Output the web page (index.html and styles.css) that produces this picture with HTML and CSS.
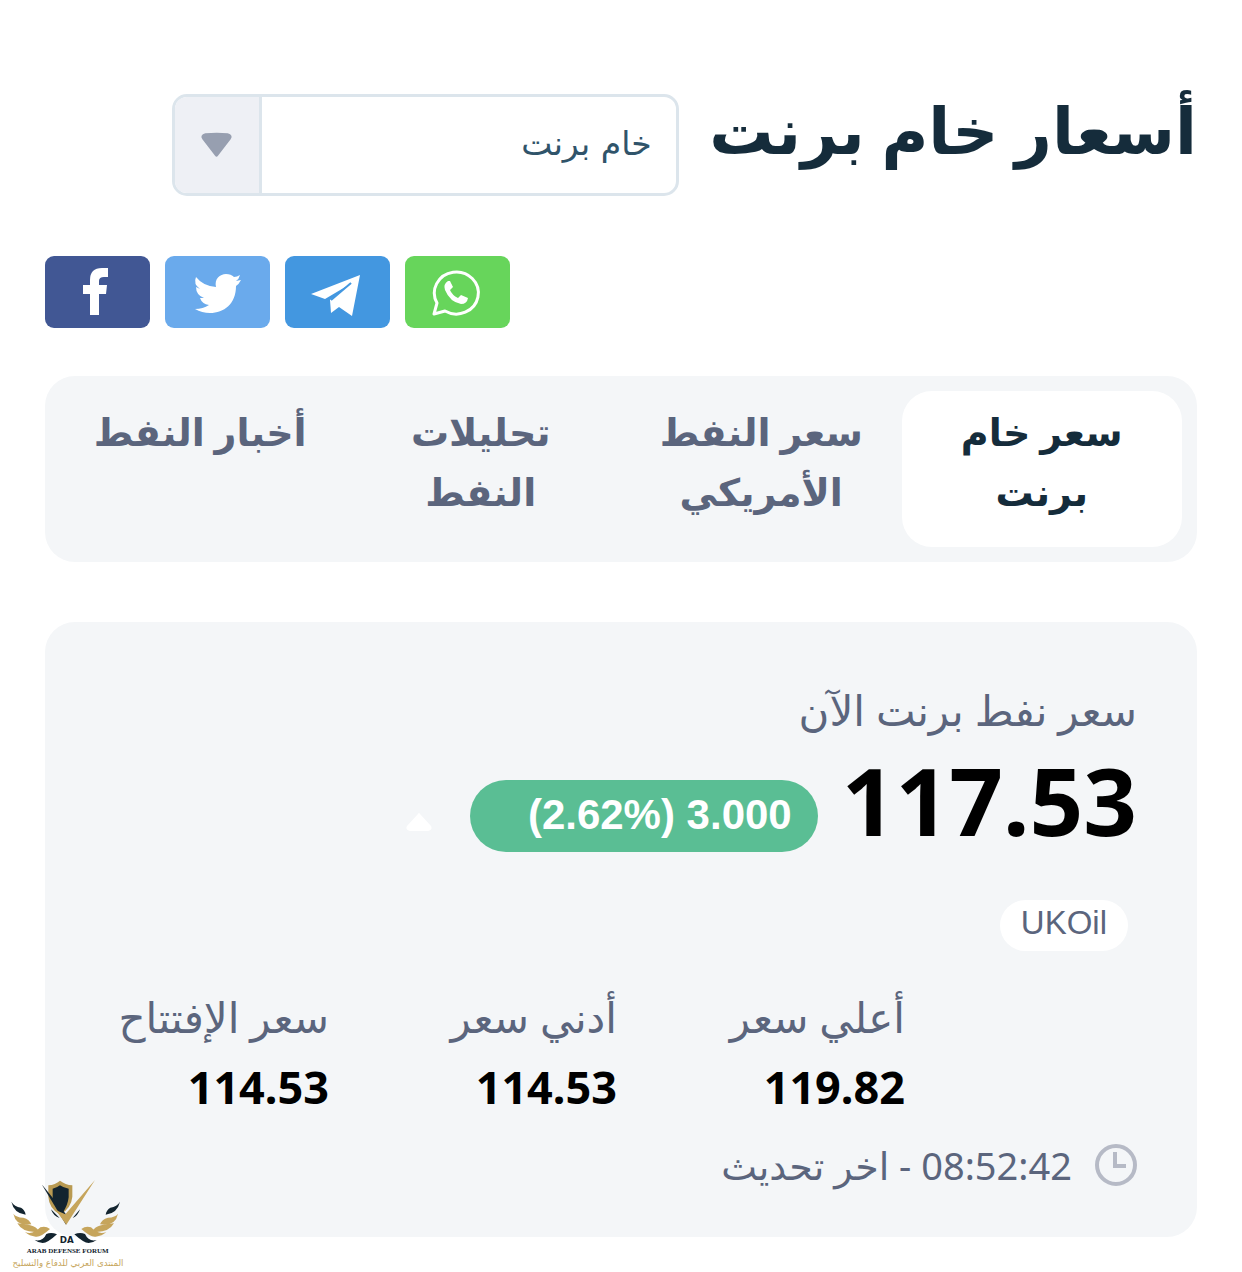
FILE: index.html
```
<!DOCTYPE html>
<html lang="ar" dir="rtl">
<head>
<meta charset="utf-8">
<meta name="viewport" content="width=device-width, initial-scale=1">
<title>أسعار خام برنت</title>
<link rel="stylesheet" href="styles.css">
</head>

<body>
<div class="page">
<div class="header">
	<h1 class="title">أسعار خام برنت</h1>
	<div class="selectbox">
		<select id="oil" aria-label="خام برنت">
			<option>خام برنت</option>
		</select>
		<svg class="arrow" width="86" height="96" viewBox="0 0 86 96"><path d="M31 36 Q43 35 54 36 Q60 38 57 42 L44 59 Q42.500 61 41 59 L28 42 Q25 38 31 36 Z" fill="#979fb0"/></svg>
	</div>
</div>

<div class="share">
	<a href="#" class="sharebutton whatsapp" aria-label="WhatsApp"><svg width="105" height="72" viewBox="0 0 105 72"><path d="M29 58 L32 47 A22 21 0 1 1 40 55 Z" fill="none" stroke="#fff" stroke-width="3" stroke-linejoin="round"/><path d="M43 25 Q38 28 40 34 Q45 46 56 48 Q62 48 63 42 L56 39 L53 42 Q47 39 45 34 L48 31 L45 25 Z" fill="#fff"/></svg></a>
	<a href="#" class="sharebutton telegram" aria-label="Telegram"><svg width="105" height="72" viewBox="0 0 105 72"><path d="M75 19 L67 60 L54 51 L46 57 L45 44 L67 27 L40 43 L26 38 Z" fill="#fff"/><path d="M46 44 L66 27" stroke="#4397e0" stroke-width="2"/></svg></a>
	<a href="#" class="sharebutton twitter" aria-label="Twitter"><svg width="105" height="72" viewBox="0 0 105 72"><path d="M31 21 Q38 30 51 31 C49 23 55 18 61 18 Q66 18 69 21 Q72 21 75 19 Q74 23 71 25 L76 24 Q74 28 71 30 C71 48 59 57 45 57 Q37 57 30 53 Q38 53 44 49 Q37 48 35 42 H39 Q31 39 31 31 L35 33 Q28 28 31 21 Z" fill="#fff"/></svg></a>
	<a href="#" class="sharebutton facebook" aria-label="Facebook"><svg width="105" height="72" viewBox="0 0 105 72"><path d="M45 59 V38 H38 V29 H45 V24 Q45 12 57 12 H63 V21 H59 Q54 21 54 25 V29 H62 L61 38 H54 V59 Z" fill="#fff"/></svg></a>
</div>

<div class="tabs">
	<a href="#" class="tab active">سعر خام<br>برنت</a>
	<a href="#" class="tab">سعر النفط<br>الأمريكي</a>
	<a href="#" class="tab">تحليلات<br>النفط</a>
	<a href="#" class="tab">أخبار النفط</a>
</div>

<div class="card">
	<div class="label">سعر نفط برنت الآن</div>
	<div class="pricerow">
		<span class="price">117.53</span>
		<span class="change" dir="ltr">(2.62%) 3.000</span>
		<svg class="up" width="26" height="20" viewBox="0 0 26 20"><path d="M12 2 Q13 0 14 2 L25 14 Q27 18 22 19 H4 Q-1 18 1 14 Z" fill="#fff"/></svg>
	</div>
	<span class="symbol">UKOil</span>
	<div class="stats">
		<div class="stat"><div class="label">أعلي سعر</div><div class="value">119.82</div></div>
		<div class="stat"><div class="label">أدني سعر</div><div class="value">114.53</div></div>
		<div class="stat"><div class="label">سعر الإفتتاح</div><div class="value">114.53</div></div>
	</div>
	<div class="updated">
		<svg width="42" height="42" viewBox="0 0 42 42" fill="none" stroke="#b6bac6"><circle cx="21" cy="21" r="19" stroke-width="4"/><path d="M20 8 V22 H31" stroke-width="4"/></svg>
		<span>08:52:42 - اخر تحديث</span>
	</div>
</div>

<svg class="forum" width="116" height="92" viewBox="30 57 348 276" direction="ltr">
	<path d="M145 76 Q166 74 180 62 Q196 74 217 76 V110 Q214 145 180 164 Q147 145 145 110 Z" fill="#b99a52"/>
	<path d="M158 86 Q170 84 180 76 Q191 84 206 86 V112 Q203 138 188 158 Q160 138 158 112 Z" fill="#13242f"/>
	<path d="M125 73 L190 152 L204 171 L198 194 Z" fill="#13242f"/>
	<path d="M285 60 L199 194 L167 150 L196 163 Z" fill="#c6a55c"/>
	<path d="M153 148 L179 174 Q160 169 153 148 Z M240 148 L218 174 Q233 169 240 148 Z" fill="#13242f"/>
	<g>
		<path d="M34 125 Q43 140 63 143 Q75 150 77 164 Q42 160 34 125 Z" fill="#13242f"/>
		<path d="M40 161 Q48 172 70 173 Q89 178 94 193 Q48 200 40 161 Z" fill="#c6a55c"/>
		<path d="M52 190 Q74 191 91 196 Q110 200 117 215 Q69 220 52 190 Z" fill="#c6a55c"/>
		<path d="M75 216 Q98 226 121 202 Q136 196 150 207 Q121 233 107 230 Q88 228 75 216 Z" fill="#c6a55c"/>
		<path d="M104 240 Q128 246 139 222 Q154 216 171 223 Q143 249 128 249 Q114 248 104 240 Z" fill="#13242f"/>
	</g>
	<g transform="translate(394 0) scale(-1 1)">
		<path d="M34 125 Q43 140 63 143 Q75 150 77 164 Q42 160 34 125 Z" fill="#13242f"/>
		<path d="M40 161 Q48 172 70 173 Q89 178 94 193 Q48 200 40 161 Z" fill="#c6a55c"/>
		<path d="M52 190 Q74 191 91 196 Q110 200 117 215 Q69 220 52 190 Z" fill="#c6a55c"/>
		<path d="M75 216 Q98 226 121 202 Q136 196 150 207 Q121 233 107 230 Q88 228 75 216 Z" fill="#c6a55c"/>
		<path d="M104 240 Q128 246 139 222 Q154 216 171 223 Q143 249 128 249 Q114 248 104 240 Z" fill="#13242f"/>
	</g>
	<text x="200" y="250" class="forumda">DA</text>
	<text x="203" y="280" class="forumname">ARAB DEFENSE FORUM</text>
	<text x="204" y="317" class="forumarabic">المنتدى العربي للدفاع والتسليح</text>
</svg>
</div>
</body>
</html>
```
FILE: styles.css
```
*
{
	box-sizing:border-box;
}
body
{
	margin:0;
	background:#fff;
	font-family:"Noto Sans", "DejaVu Sans", sans-serif;
	color:#5b657d;
}
a
{
	text-decoration:none;
}
svg
{
	display:block;
}
.page
{
	position:relative;
	padding:94px 45px 35px;
}
.header
{
	display:grid;
	grid-template-columns:45% 44%;
}
.title
{
	margin:0;
	font-size:64px;
	line-height:72px;
	color:#152c3b;
	white-space:nowrap;
}
.selectbox
{
	position:relative;
}
.selectbox select
{
	display:block;
	appearance:none;
	width:100%;
	height:102px;
	padding:0 24px 4px 110px;
	border:3px solid #dce5ec;
	border-radius:15px;
	background:#fff;
	font-family:"DejaVu Sans", sans-serif;
	font-size:33px;
	color:#30546a;
}
.arrow
{
	position:absolute;
	left:3px;
	top:3px;
	width:87px;
	background:#eef0f5;
	border-right:3px solid #dce5ec;
	border-radius:12px 0 0 12px;
	pointer-events:none;
}
.share
{
	display:flex;
	justify-content:flex-end;
	gap:15px;
	margin:60px 0 48px;
}
.sharebutton
{
	border-radius:9px;
}
.facebook
{
	background:#415794;
}
.twitter
{
	background:#6aaaec;
}
.telegram
{
	background:#4397e0;
}
.whatsapp
{
	background:#67d55b;
}
.tabs
{
	display:flex;
	padding:15px;
	border-radius:30px;
	background:#f4f6f8;
}
.tab
{
	flex:1;
	padding:10px 0 26px;
	border-radius:30px;
	font-size:38px;
	font-weight:bold;
	line-height:60px;
	text-align:center;
	color:#5b657d;
	white-space:nowrap;
}
.active
{
	background:#fff;
	color:#152c3b;
}
.card
{
	margin-top:60px;
	padding:60px 60px 46px;
	border-radius:30px;
	background:#f4f6f8;
}
.label
{
	font-size:42px;
	line-height:56px;
	white-space:nowrap;
}
.pricerow
{
	display:flex;
	align-items:flex-start;
	height:140px;
}
.price
{
	font-size:94px;
	font-weight:bold;
	line-height:124px;
	color:#000;
}
.change
{
	margin:42px 24px 0 0;
	padding:0 26px 2px 58px;
	border-radius:36px;
	background:#5abe94;
	font-family:"Liberation Sans", sans-serif;
	font-size:42px;
	font-weight:bold;
	line-height:70px;
	color:#fff;
}
.up
{
	margin:74px 38px 0 0;
}
.symbol
{
	display:inline-block;
	margin:22px 9px 0 0;
	padding:0 21px 6px;
	border-radius:26px;
	background:#fff;
	font-family:"Liberation Sans", sans-serif;
	font-size:33px;
	line-height:45px;
}
.stats
{
	display:flex;
	margin:38px 232px 0 0;
}
.stat
{
	flex:0 0 36%;
}
.value
{
	font-size:45px;
	font-weight:bold;
	line-height:84px;
	color:#000;
}
.updated
{
	display:flex;
	align-items:center;
	gap:23px;
	margin-top:10px;
	font-size:38px;
	line-height:52px;
}
.forum
{
	position:absolute;
	left:10px;
	bottom:1px;
}
.forumda
{
	font:bold 26px "DejaVu Sans", sans-serif;
	fill:#13242f;
	text-anchor:middle;
}
.forumname
{
	font:bold 21px "Liberation Serif", serif;
	fill:#13242f;
	text-anchor:middle;
}
.forumarabic
{
	font:26px "DejaVu Sans", sans-serif;
	fill:#c6a55c;
	text-anchor:middle;
}
```
